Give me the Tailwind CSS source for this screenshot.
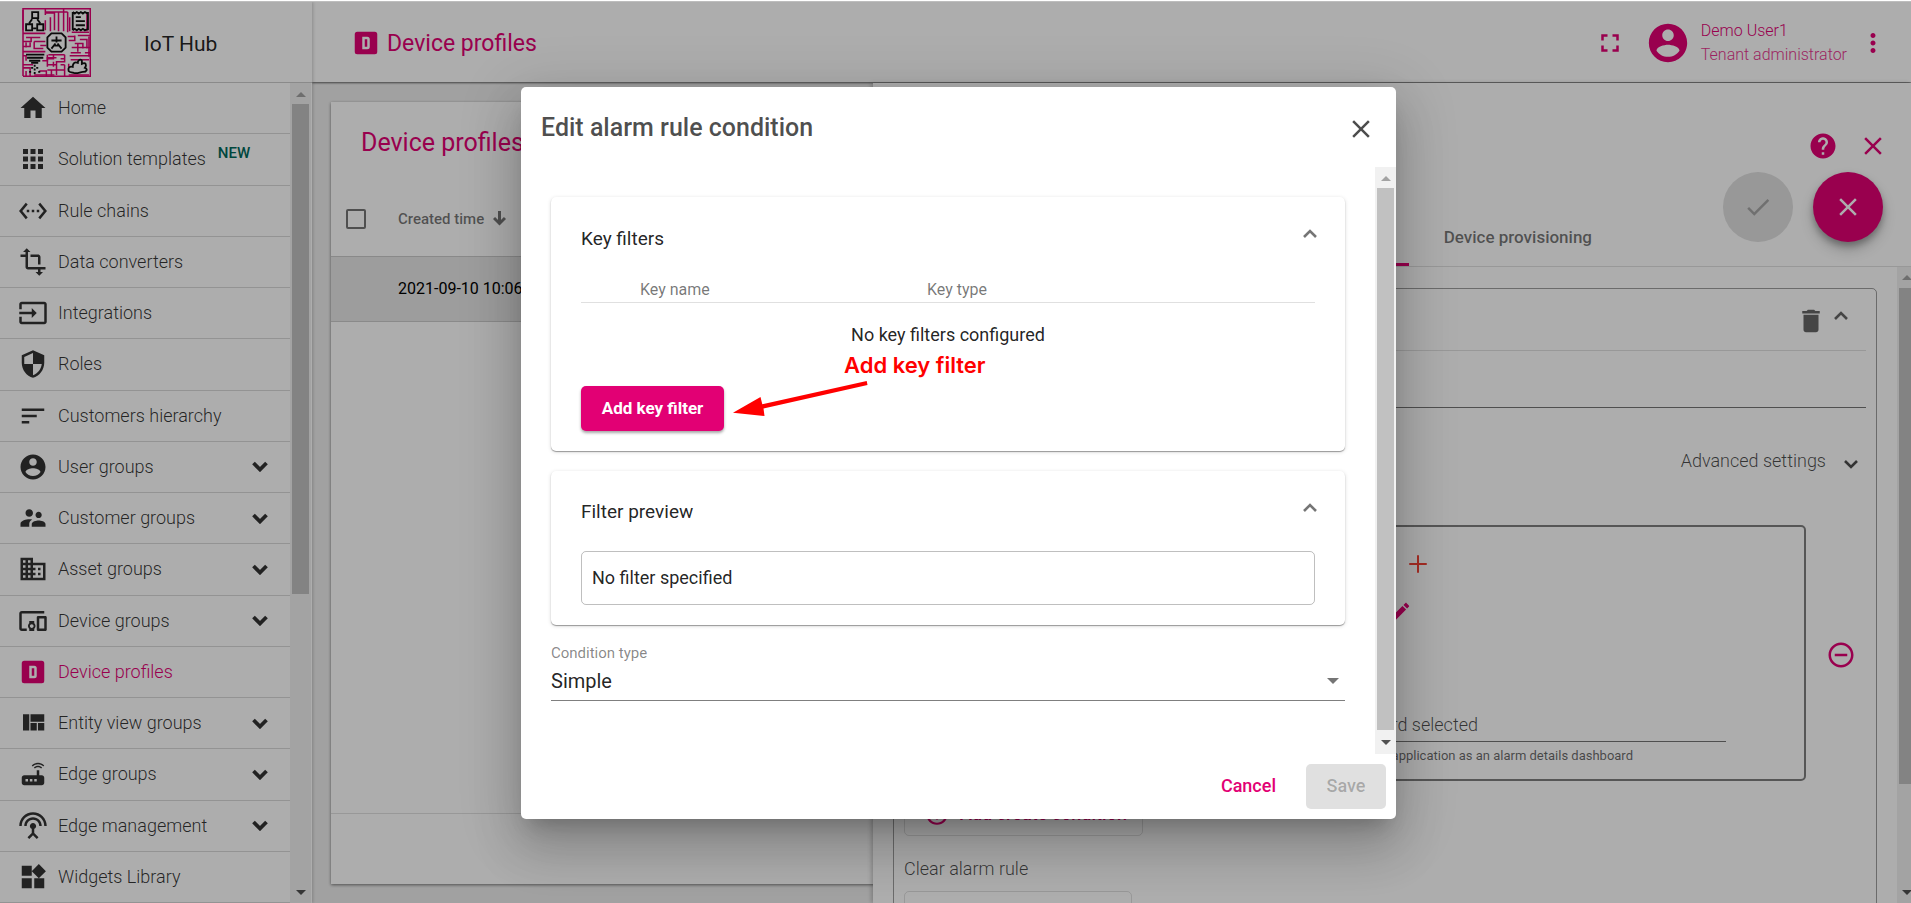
<!DOCTYPE html>
<html lang="en">
<head>
<meta charset="utf-8">
<title>IoT Hub - Device profiles</title>
<script src="https://cdn.jsdelivr.net/npm/@tailwindcss/browser@4"></script>
</head>
<body class="relative h-screen overflow-hidden bg-[#eeeeee] font-[Roboto,sans-serif] text-[18px] leading-6 text-black/87">

<svg class="hidden" aria-hidden="true">
  <symbol id="home" viewBox="0 0 24 24"><path d="M10 20v-6h4v6h5v-8h3L12 3 2 12h3v8z"/></symbol>
  <symbol id="apps" viewBox="0 0 24 24"><path d="M4 8h4V4H4v4zm6 12h4v-4h-4v4zm-6 0h4v-4H4v4zm0-6h4v-4H4v4zm6 0h4v-4h-4v4zm6-10v4h4V4h-4zm-6 4h4V4h-4v4zm6 6h4v-4h-4v4zm0 6h4v-4h-4v4z"/></symbol>
  <symbol id="chains" viewBox="0 0 24 24"><path d="M7.77 6.76L6.23 5.48.82 12l5.41 6.52 1.54-1.28L3.42 12l4.35-5.24zM7 13h2v-2H7v2zm10-2h-2v2h2v-2zm-6 2h2v-2h-2v2zm6.77-7.52l-1.54 1.28L20.58 12l-4.35 5.24 1.54 1.28L23.18 12l-5.41-6.52z"/></symbol>
  <symbol id="transform" viewBox="0 0 24 24"><path d="M22 18v-2H8V4h2L7 1 4 4h2v2H2v2h4v8c0 1.1.9 2 2 2h8v2h-2l3 3 3-3h-2v-2h4zM10 8h6v6h2V8c0-1.1-.9-2-2-2h-6v2z"/></symbol>
  <symbol id="input" viewBox="0 0 24 24"><path d="M21 3.01H3c-1.1 0-2 .9-2 2V9h2V4.99h18v14.03H3V15H1v4.01c0 1.1.9 1.98 2 1.98h18c1.1 0 2-.88 2-1.98v-14c0-1.11-.9-2-2-2zM11 16l4-4-4-4v3H1v2h10v3z"/></symbol>
  <symbol id="security" viewBox="0 0 24 24"><path d="M12 1L3 5v6c0 5.55 3.84 10.74 9 12 5.16-1.26 9-6.45 9-12V5l-9-4zm0 10.99h7c-.53 4.12-3.28 7.79-7 8.94V12H5V6.3l7-3.11v8.8z"/></symbol>
  <symbol id="sort" viewBox="0 0 24 24"><path d="M3 18h6v-2H3v2zM3 6v2h18V6H3zm0 7h12v-2H3v2z"/></symbol>
  <symbol id="account" viewBox="0 0 24 24"><path d="M12 2C6.48 2 2 6.48 2 12s4.48 10 10 10 10-4.48 10-10S17.52 2 12 2zm0 3c1.66 0 3 1.34 3 3s-1.34 3-3 3-3-1.34-3-3 1.34-3 3-3zm0 14.2c-2.5 0-4.71-1.28-6-3.22.03-1.99 4-3.08 6-3.08 1.99 0 5.97 1.09 6 3.08-1.29 1.94-3.5 3.22-6 3.22z"/></symbol>
  <symbol id="customers" viewBox="0 0 24 24"><path d="M16.5 12c1.38 0 2.49-1.12 2.49-2.5S17.88 7 16.5 7C15.12 7 14 8.12 14 9.5s1.12 2.5 2.5 2.5zM9 11c1.66 0 2.99-1.34 2.99-3S10.66 5 9 5C7.34 5 6 6.34 6 8s1.34 3 3 3zm7.5 3c-1.83 0-5.5.92-5.5 2.75V19h11v-2.25c0-1.83-3.67-2.75-5.5-2.75zM9 13c-2.33 0-7 1.17-7 3.5V19h7v-2.25c0-.85.33-2.34 2.37-3.47C10.5 13.1 9.66 13 9 13z"/></symbol>
  <symbol id="domain" viewBox="0 0 24 24"><path d="M12 7V3H2v18h20V7H12zM6 19H4v-2h2v2zm0-4H4v-2h2v2zm0-4H4V9h2v2zm0-4H4V5h2v2zm4 12H8v-2h2v2zm0-4H8v-2h2v2zm0-4H8V9h2v2zm0-4H8V5h2v2zm10 12h-8v-2h2v-2h-2v-2h2v-2h-2V9h8v10zm-2-8h-2v2h2v-2zm0 4h-2v2h2v-2z"/></symbol>
  <symbol id="devices" viewBox="0 0 24 24"><path d="M3 6h18V4H3c-1.1 0-2 .9-2 2v12c0 1.1.9 2 2 2h4v-2H3V6zm10 6H9v1.78c-.61.55-1 1.33-1 2.22s.39 1.67 1 2.22V20h4v-1.78c.61-.55 1-1.34 1-2.22s-.39-1.67-1-2.22V12zm-2 5.5c-.83 0-1.5-.67-1.5-1.5s.67-1.5 1.5-1.5 1.5.67 1.5 1.5-.67 1.5-1.5 1.5zM22 8h-6c-.5 0-1 .5-1 1v10c0 .5.5 1 1 1h6c.5 0 1-.5 1-1V9c0-.5-.5-1-1-1zm-1 10h-4v-8h4v8z"/></symbol>
  <symbol id="dbox" viewBox="0 0 24 24"><path fill-rule="evenodd" d="M9 7h4a2 2 0 0 1 2 2v6a2 2 0 0 1-2 2H9V7zm2 2v6h2V9h-2zM5 3h14a2 2 0 0 1 2 2v14a2 2 0 0 1-2 2H5a2 2 0 0 1-2-2V5a2 2 0 0 1 2-2z"/></symbol>
  <symbol id="quilt" viewBox="0 0 24 24"><path d="M10 18h5v-6h-5v6zm-6 0h5V5H4v13zm12 0h5v-6h-5v6zM10 5v6h11V5H10z"/></symbol>
  <symbol id="router" viewBox="0 0 24 24"><path d="M20.2 5.9l.8-.8C19.6 3.7 17.8 3 16 3s-3.6.7-5 2.1l.8.8C13 4.8 14.5 4.2 16 4.2s3 .6 4.2 1.7zm-.9.8c-.9-.9-2.1-1.4-3.3-1.4s-2.4.5-3.3 1.4l.8.8c.7-.7 1.6-1 2.5-1 .9 0 1.8.3 2.5 1l.8-.8zM19 13h-2V9h-2v4H5c-1.1 0-2 .9-2 2v4c0 1.1.9 2 2 2h14c1.1 0 2-.9 2-2v-4c0-1.1-.9-2-2-2zM8 18H6v-2h2v2zm3.5 0h-2v-2h2v2zm3.5 0h-2v-2h2v2z"/></symbol>
  <symbol id="antenna" viewBox="0 0 24 24"><path d="M12 5c-3.87 0-7 3.13-7 7h2c0-2.76 2.24-5 5-5s5 2.24 5 5h2c0-3.87-3.13-7-7-7zm1 9.29c.88-.39 1.5-1.26 1.5-2.29 0-1.38-1.12-2.5-2.5-2.5S9.5 10.62 9.5 12c0 1.02.62 1.9 1.5 2.29v3.3L7.59 21 9 22.41l3-3 3 3L16.41 21 13 17.59v-3.3zM12 1C5.93 1 1 5.93 1 12h2c0-4.97 4.03-9 9-9s9 4.03 9 9h2c0-6.07-4.93-11-11-11z"/></symbol>
  <symbol id="widgets" viewBox="0 0 24 24"><path d="M13 13v8h8v-8h-8zM3 21h8v-8H3v8zM3 3v8h8V3H3zm13.66-1.31L11 7.34 16.66 13l5.66-5.66-5.66-5.65z"/></symbol>
  <symbol id="close" viewBox="0 0 24 24"><path d="M19 6.41L17.59 5 12 10.59 6.41 5 5 6.41 10.59 12 5 17.59 6.41 19 12 13.41 17.59 19 19 17.59 13.41 12z"/></symbol>
  <symbol id="toggle" viewBox="0 0 16 11"><path d="M1.5 2l6.5 6.5L14.5 2" fill="none" stroke="currentColor" stroke-width="3.8"/></symbol>
  <symbol id="chev-up" viewBox="0 0 14 9"><path d="M1 8l6-6 6 6" fill="none" stroke="currentColor" stroke-width="2.6"/></symbol>
  <symbol id="chev-down" viewBox="0 0 14 9"><path d="M1 1l6 6 6-6" fill="none" stroke="currentColor" stroke-width="2.6"/></symbol>
  <symbol id="tri-up" viewBox="0 0 10 5"><path d="M0 5l5-5 5 5z"/></symbol>
  <symbol id="tri-down" viewBox="0 0 10 5"><path d="M0 0l5 5 5-5z"/></symbol>
</svg>

<div class="flex h-full flex-col">
  <div class="relative z-50 h-0.5 shrink-0 border-b border-[#bdbdbd] bg-white"></div>
  <div class="flex min-h-0 flex-1">

    <!-- Side navigation -->
    <aside class="relative z-10 flex w-[312px] shrink-0 flex-col bg-white shadow-[1px_0_3px_rgba(0,0,0,0.2)]">
      <div class="flex h-[81px] shrink-0 items-center gap-[53px] border-b border-black/20 pl-[22px]">
        <svg class="size-[69px]" viewBox="0 0 68 68" fill="none" stroke-width="1.5" aria-label="IoT Hub logo">
          <g stroke="#e20074">
            <path d="M1 67V.8H67.3V67.3H1" />
            <path d="M23 1v6M23 5h9v17M28 9v14M36 4v19M41 1v22M23 12v10M45 4v20M23 4h22M49 24h17M45 28h7M46 32h6v-5M55 27h12M57 31h7v9M52 35h8v5M49 39h18M55 43v-8M48 44h10M47 47h20M48 51h18M62 44h5"/>
            <path d="M1 25h22M4 29h14M1 33h8v-4M12 33h11M12 33v7h9M1 38h7v-4M1 43h22M4 39v-5M18 37h6M26 46h16M25 50h6v-4M34 49h-9v9M42 46v7h-8v13M38 50h4M25 56h9M31 53v5M25 61h17M42 56v11M38 56h4M29 61v6M46 55v8M1 56h10M1 59h7v8M4 62v5M12 66h20M17 62h7v5M46 66h20"/>
            <path d="M1 47h3v5M20 52h5v-6M64 4v19M47 9v14M66 28v20M1 22v-20"/>
          </g>
          <g stroke="#111" stroke-width="1.8">
            <path d="M10 4h6v6h-6zM4 16h6v6h-6zM15 16h6v6h-6zM10 11l-3 4M15 11l3 4M11 20h3"/>
            <path d="M50 4v18M65 4v18M50 4l2 1.5 2-1.5 2 1.5 2-1.5 2 1.5 2-1.5 3 1.5M50 22l2-1.5 2 1.5 2-1.5 2 1.5 2-1.5 2 1.5 3-1.5M53 9h5M53 13h9M53 17h9"/>
            <path d="M29 25h10l4 4v10l-4 4H29l-4-4V29z" fill="#fff"/>
            <path d="M34 28v6M29 32h10M33 35l-4 5M35 35l4 5M31 37h6"/>
            <path d="M4 46h18M5 49h16M7 52h11M9 54h7"/>
            <path d="M12.5 56v9M9 59h2M14 59h3M7 63h2M16 63h2" stroke-dasharray="2 1.5"/>
            <path d="M46 62c-1-3 1-5 4-4 0-4 2-5 5-4 0-3 3-4 4-2v3c4-2 5 1 3 4 3 1 2 4-2 4-3 0-5 2-9 1-2-1-4 0-5-2z" fill="#fff"/>
          </g>
        </svg>
        <span class="pt-1 text-[21px]">IoT Hub</span>
      </div>
      <div class="flex min-h-0 flex-1">
        <nav class="flex min-w-0 flex-1">
          <ul class="flex flex-1 flex-col font-light text-black/80 [&>li]:flex [&>li]:flex-1 [&>li]:border-b [&>li]:border-black/15 [&_a]:flex [&_a]:flex-1 [&_a]:items-center [&_a]:gap-2.5 [&_a]:pl-[18px] [&_a]:pr-[22px] [&_svg]:fill-current">
            <li><a href="#"><svg class="size-[30px]"><use href="#home"/></svg>Home</a></li>
            <li><a href="#"><svg class="size-[30px]"><use href="#apps"/></svg>Solution templates<span class="mb-3 ml-0.5 text-[15px] leading-5 font-medium text-[#00695c]">NEW</span></a></li>
            <li><a href="#"><svg class="size-[30px]"><use href="#chains"/></svg>Rule chains</a></li>
            <li><a href="#"><svg class="size-[30px]"><use href="#transform"/></svg>Data converters</a></li>
            <li><a href="#"><svg class="size-[30px]"><use href="#input"/></svg>Integrations</a></li>
            <li><a href="#"><svg class="size-[30px]"><use href="#security"/></svg>Roles</a></li>
            <li><a href="#"><svg class="size-[30px]"><use href="#sort"/></svg>Customers hierarchy</a></li>
            <li><a href="#"><svg class="size-[30px]"><use href="#account"/></svg>User groups<svg class="ml-auto h-[11px] w-4"><use href="#toggle"/></svg></a></li>
            <li><a href="#"><svg class="size-[30px]"><use href="#customers"/></svg>Customer groups<svg class="ml-auto h-[11px] w-4"><use href="#toggle"/></svg></a></li>
            <li><a href="#"><svg class="size-[30px]"><use href="#domain"/></svg>Asset groups<svg class="ml-auto h-[11px] w-4"><use href="#toggle"/></svg></a></li>
            <li><a href="#"><svg class="size-[30px]"><use href="#devices"/></svg>Device groups<svg class="ml-auto h-[11px] w-4"><use href="#toggle"/></svg></a></li>
            <li class="text-[#e20074]"><a href="#" aria-current="page"><svg class="size-[30px]"><use href="#dbox"/></svg>Device profiles</a></li>
            <li><a href="#"><svg class="size-[30px]"><use href="#quilt"/></svg>Entity view groups<svg class="ml-auto h-[11px] w-4"><use href="#toggle"/></svg></a></li>
            <li><a href="#"><svg class="size-[30px]"><use href="#router"/></svg>Edge groups<svg class="ml-auto h-[11px] w-4"><use href="#toggle"/></svg></a></li>
            <li><a href="#"><svg class="size-[30px]"><use href="#antenna"/></svg>Edge management<svg class="ml-auto h-[11px] w-4"><use href="#toggle"/></svg></a></li>
            <li><a href="#"><svg class="size-[30px]"><use href="#widgets"/></svg>Widgets Library</a></li>
          </ul>
        </nav>
        <div class="mr-px flex w-[21px] flex-col items-center bg-[#f1f1f1] pt-[9px] pb-2">
          <svg class="h-[5px] w-2.5 fill-[#a3a3a3]"><use href="#tri-up"/></svg>
          <div class="mt-[7px] h-[61%] w-[17px] bg-[#c1c1c1]"></div>
          <svg class="mt-auto h-[5px] w-2.5 fill-[#505050]"><use href="#tri-down"/></svg>
        </div>
      </div>
    </aside>

    <div class="flex min-w-0 flex-1 flex-col">
      <!-- Top bar -->
      <header class="relative flex h-20 shrink-0 items-center bg-white pt-0.5 pr-[23px] pl-[39px] text-[#e20074] shadow-[0_1px_2px_rgba(0,0,0,0.6)]">
        <svg class="size-[30px] fill-current"><use href="#dbox"/></svg>
        <h1 class="ml-1.5 pt-0.5 text-[23px]">Device profiles</h1>
        <button class="ml-auto" aria-label="Fullscreen"><svg class="size-[30px] fill-current" viewBox="0 0 24 24"><path d="M7 14H5v5h5v-2H7v-3zm-2-4h2V7h3V5H5v5zm12 7h-3v2h5v-5h-2v3zM14 5v2h3v3h2V5h-5z"/></svg></button>
        <svg class="ml-5 size-[46px] fill-current"><use href="#account"/></svg>
        <div class="ml-2.5 text-[16px] leading-6 font-light"><div>Demo User1</div><div class="opacity-80">Tenant administrator</div></div>
        <button class="ml-[11px]" aria-label="More"><svg class="size-[30px] fill-current" viewBox="0 0 24 24"><path d="M12 8c1.1 0 2-.9 2-2s-.9-2-2-2-2 .9-2 2 .9 2 2 2zm0 2c-1.1 0-2 .9-2 2s.9 2 2 2 2-.9 2-2-.9-2-2-2zm0 6c-1.1 0-2 .9-2 2s.9 2 2 2 2-.9 2-2-.9-2-2-2z"/></svg></button>
      </header>

      <!-- Device profiles table -->
      <main class="flex min-h-0 flex-1 flex-col px-[19px] pt-5 pb-[19px]">
        <section class="flex flex-1 flex-col bg-white shadow-[0_1px_3px_rgba(0,0,0,0.5)]">
          <h2 class="flex h-[82px] items-center pl-[30px] text-[25px] text-[#e20074]">Device profiles</h2>
          <table class="w-full border-collapse text-left">
            <thead>
              <tr class="h-[72px] border-b border-black/12 text-[15px] text-black/54">
                <th class="w-[67px] pb-0.5 pl-[15px]"><input type="checkbox" aria-label="Select all" class="block size-5 appearance-none rounded-[2px] border-2 border-black/54"></th>
                <th class="pb-0.5 font-medium"><span class="flex items-center gap-[9px]">Created time<svg class="h-[15px] w-[13px]" viewBox="0 0 13 15" fill="none" stroke="currentColor" stroke-width="3"><path d="M6.5 0v12M1 7l5.5 5.5L12 7"/></svg></span></th>
              </tr>
            </thead>
            <tbody>
              <tr class="h-[65px] border-b border-black/20 bg-[#e7e7e7] text-[16px] text-black"><td></td><td>2021-09-10 10:06:44</td></tr>
            </tbody>
          </table>
          <div class="mt-auto h-[71px] border-t border-black/12"></div>
        </section>
      </main>
    </div>
  </div>
</div>

<!-- Profile details drawer -->
<section class="absolute top-[83px] right-0 bottom-0 left-[873px] flex flex-col bg-white shadow-[-2px_0_4px_rgba(0,0,0,0.2)]">
  <div class="flex h-[126px] shrink-0 items-center justify-end gap-5 pr-[23px] text-[#e20074]">
    <button aria-label="Help"><svg class="size-[30px] fill-current" viewBox="0 0 24 24"><path d="M12 2C6.48 2 2 6.48 2 12s4.48 10 10 10 10-4.48 10-10S17.52 2 12 2zm1 17h-2v-2h2v2zm2.07-7.75l-.9.92C13.45 12.9 13 13.5 13 15h-2v-.5c0-1.1.45-2.1 1.17-2.83l1.24-1.26c.37-.36.59-.86.59-1.41 0-1.1-.9-2-2-2s-2 .9-2 2H8c0-2.21 1.79-4 4-4s4 1.79 4 4c0 .88-.36 1.68-.93 2.25z"/></svg></button>
    <button aria-label="Close details"><svg class="size-[30px] fill-current"><use href="#close"/></svg></button>
  </div>
  <div class="flex h-[58px] shrink-0 items-end justify-end border-b border-black/12 pr-[319px] text-[17px] font-medium text-black/54">
    <div class="mr-[35px] h-[3px] w-[200px] bg-[#e20074]"></div>
    <button class="h-[58px]">Device provisioning</button>
  </div>
  <div class="absolute top-[89px] right-7 flex gap-5">
    <button disabled aria-label="Apply" class="flex size-[70px] items-center justify-center rounded-full bg-[#e0e0e0] text-black/26"><svg class="size-[30px] fill-current" viewBox="0 0 24 24"><path d="M9 16.17L4.83 12l-1.42 1.41L9 19 21 7l-1.41-1.41z"/></svg></button>
    <button aria-label="Discard" class="flex size-[70px] items-center justify-center rounded-full bg-[#e20074] text-white shadow-[0_4px_6px_rgba(0,0,0,0.25),0_8px_14px_rgba(0,0,0,0.2)]"><svg class="size-[30px] fill-current"><use href="#close"/></svg></button>
  </div>

  <div class="flex min-h-0 flex-1 overflow-hidden">
    <div class="mx-5 mt-[21px] h-[800px] min-w-0 flex-1 rounded-[5px] border border-black/38 px-2.5">
      <div class="flex h-[62px] items-start justify-end gap-2 border-b border-black/12 pt-[17px] pr-[18px] text-black/60">
        <button aria-label="Delete rule"><svg class="size-[30px] fill-current" viewBox="0 0 24 24"><path d="M6 19c0 1.1.9 2 2 2h8c1.1 0 2-.9 2-2V7H6v12zM19 4h-3.5l-1-1h-5l-1 1H5v2h14V4z"/></svg></button>
        <button aria-label="Collapse rule" class="mt-[5px]"><svg class="h-[9px] w-3.5"><use href="#chev-up"/></svg></button>
      </div>
      <div class="h-[57px] border-b border-black/54"></div>
      <div class="flex h-[108px] items-center justify-end gap-[18px] pr-2 pb-0.5 font-light text-black/70">Advanced settings<svg class="mt-1.5 h-[9px] w-3.5"><use href="#chev-down"/></svg></div>
      <div class="mt-[9px] flex items-center">
        <div class="h-[256px] min-w-0 flex-1 rounded-[5px] border-2 border-black/50">
          <div class="flex h-[72px] items-center justify-end pt-0.5 pr-[371px]"><button aria-label="Add condition"><svg class="size-[30px] fill-[#f44336]" viewBox="0 0 24 24"><path d="M19 12.8h-6.2V19h-1.6v-6.2H5v-1.6h6.2V5h1.6v6.2H19z"/></svg></button></div>
          <div class="flex h-6 items-center justify-end pr-[392px] text-[#e20074]"><button aria-label="Edit details"><svg class="size-[23px] fill-current" viewBox="0 0 24 24"><path d="M3 17.25V21h3.75L17.81 9.94l-3.75-3.75L3 17.25zM20.71 7.04c.39-.39.39-1.02 0-1.41l-2.34-2.34c-.39-.39-1.02-.39-1.41 0l-1.83 1.83 3.75 3.75 1.83-1.83z"/></svg></button></div>
          <div class="mt-[90px] mr-[78px] border-b border-black/54 pr-[248px] pb-1 text-right font-light text-black/70">No dashboard selected</div>
          <p class="mt-1 pr-[171px] text-right text-[13px] leading-5 whitespace-nowrap text-black/60">Used by mobile application as an alarm details dashboard</p>
        </div>
        <div class="flex w-[60px] justify-center pt-1 pl-2.5"><button aria-label="Remove condition"><svg class="size-[30px] fill-[#e20074]" viewBox="0 0 24 24"><path d="M7 11v2h10v-2H7zm5-9C6.48 2 2 6.48 2 12s4.48 10 10 10 10-4.48 10-10S17.52 2 12 2zm0 18c-4.41 0-8-3.59-8-8s3.59-8 8-8 8 3.59 8 8-3.59 8-8 8z"/></svg></button></div>
      </div>
      <button class="mt-2.5 flex h-[45px] w-[239px] items-center gap-2.5 rounded-[5px] border border-black/12 pl-[19px] text-[18px] font-medium whitespace-nowrap text-[#e20074]"><svg class="size-[26px] shrink-0 fill-current" viewBox="0 0 24 24"><path d="M13 7h-2v4H7v2h4v4h2v-4h4v-2h-4V7zm-1-5C6.48 2 2 6.48 2 12s4.48 10 10 10 10-4.48 10-10S17.52 2 12 2zm0 18c-4.41 0-8-3.59-8-8s3.59-8 8-8 8 3.59 8 8-3.59 8-8 8z"/></svg>Add create condition</button>
      <div class="flex h-[55px] items-center pt-2.5 font-light text-black/70">Clear alarm rule</div>
      <button class="h-[45px] w-[228px] rounded-[5px] border border-black/12" aria-label="Add clear condition"></button>
    </div>
    <div class="flex w-3.5 flex-col overflow-hidden bg-[#f1f1f1] pt-2 pb-2 pl-0.5">
      <svg class="ml-[3px] h-[5px] w-2.5 shrink-0 fill-[#a3a3a3]"><use href="#tri-up"/></svg>
      <div class="mt-2 h-[80%] w-[17px] bg-[#c1c1c1]"></div>
      <svg class="mt-auto ml-[3px] h-[5px] w-2.5 shrink-0 fill-[#505050]"><use href="#tri-down"/></svg>
    </div>
  </div>
</section>

<!-- Modal dialog -->
<div class="absolute inset-0 z-40 flex items-center justify-center bg-black/32 pt-[3px] pl-1.5">
  <div role="dialog" aria-labelledby="dlg-title" class="flex w-[875px] flex-col rounded-[5px] bg-white shadow-[0_14px_19px_-9px_rgba(0,0,0,0.2),0_30px_48px_4px_rgba(0,0,0,0.14),0_11px_58px_10px_rgba(0,0,0,0.12)]">
    <div class="flex h-20 items-center justify-between pr-5 pl-5 text-black/70">
      <h2 id="dlg-title" class="pt-px text-[25px] font-medium">Edit alarm rule condition</h2>
      <button aria-label="Close" class="mt-1"><svg class="size-[30px] fill-current"><use href="#close"/></svg></button>
    </div>
    <div class="flex">
      <div class="flex-1 px-[30px] pt-[30px] pb-[53px]">
        <section class="rounded-[5px] px-[30px] pt-[27px] pb-5 shadow-[0_1px_1px_rgba(0,0,0,0.35),0_1px_4px_rgba(0,0,0,0.14)]">
          <div class="flex h-[29px] items-center justify-between"><h3 class="text-[19px]">Key filters</h3><button aria-label="Collapse key filters" class="-mr-0.5 self-start pt-[5px] text-black/54"><svg class="h-[9px] w-3.5"><use href="#chev-up"/></svg></button></div>
          <table class="mt-6 w-full table-fixed text-left">
            <thead><tr class="border-b border-black/12 text-[16px] text-black/54"><th class="w-[346px] pt-px pl-[59px] font-normal">Key name</th><th class="pt-px font-normal">Key type</th></tr></thead>
            <tbody><tr><td colspan="2" class="h-[63px] text-center">No key filters configured</td></tr></tbody>
          </table>
          <div class="relative mt-5">
            <button class="flex h-[45px] w-[143px] items-center justify-center rounded-[5px] bg-[#e20074] text-[17px] font-bold text-white shadow-[0_2px_3px_rgba(0,0,0,0.35)]">Add key filter</button>
            <!-- Callout pointing at the button -->
            <div class="absolute -top-[33px] left-[263px] font-[Inter,sans-serif] text-[22px] font-semibold whitespace-nowrap text-[#ff0000]">Add key filter</div>
            <svg class="absolute -top-1.5 left-[150px] h-10 w-[140px] fill-[#ff0000]" viewBox="0 0 140 40"><path d="M135.7 1l.8 4L32.5 28.5l1 7.5L2 32.7 29.5 17l1.8 7.2z"/></svg>
          </div>
        </section>
        <section class="mt-5 rounded-[5px] px-[30px] pt-[27px] pb-5 shadow-[0_1px_1px_rgba(0,0,0,0.35),0_1px_4px_rgba(0,0,0,0.14)]">
          <div class="flex h-[29px] items-center justify-between"><h3 class="text-[19px]">Filter preview</h3><button aria-label="Collapse filter preview" class="-mr-0.5 self-start pt-[5px] text-black/54"><svg class="h-[9px] w-3.5"><use href="#chev-up"/></svg></button></div>
          <div class="mt-6 flex h-[54px] items-center rounded-[5px] border border-black/25 pl-2.5">No filter specified</div>
        </section>
        <div class="mt-[18px] flex flex-col">
          <label for="cond" class="text-[15px] leading-5 text-black/48">Condition type</label>
          <div class="relative">
            <select id="cond" class="block h-[38px] w-full appearance-none border-b border-black/50 text-[20px]"><option>Simple</option></select>
            <svg class="pointer-events-none absolute top-[15px] right-1.5 h-1.5 w-3 fill-black/54" viewBox="0 0 12 6"><path d="M0 0h12L6 6z"/></svg>
          </div>
        </div>
      </div>
      <div class="flex w-[21px] flex-col items-center bg-[#f1f1f1] pt-[9px] pb-[9px]">
        <svg class="h-[5px] w-2.5 shrink-0 fill-[#a3a3a3]"><use href="#tri-up"/></svg>
        <div class="mt-[7px] mb-2.5 w-[17px] flex-1 bg-[#c1c1c1]"></div>
        <svg class="h-[5px] w-2.5 shrink-0 fill-[#505050]"><use href="#tri-down"/></svg>
      </div>
    </div>
    <div class="flex items-center justify-end p-2.5 font-medium">
      <button class="h-[45px] px-[30px] text-[#e20074]">Cancel</button>
      <button disabled class="h-[45px] w-20 rounded-[5px] bg-[#e0e0e0] text-black/26">Save</button>
    </div>
  </div>
</div>
</body>
</html>
